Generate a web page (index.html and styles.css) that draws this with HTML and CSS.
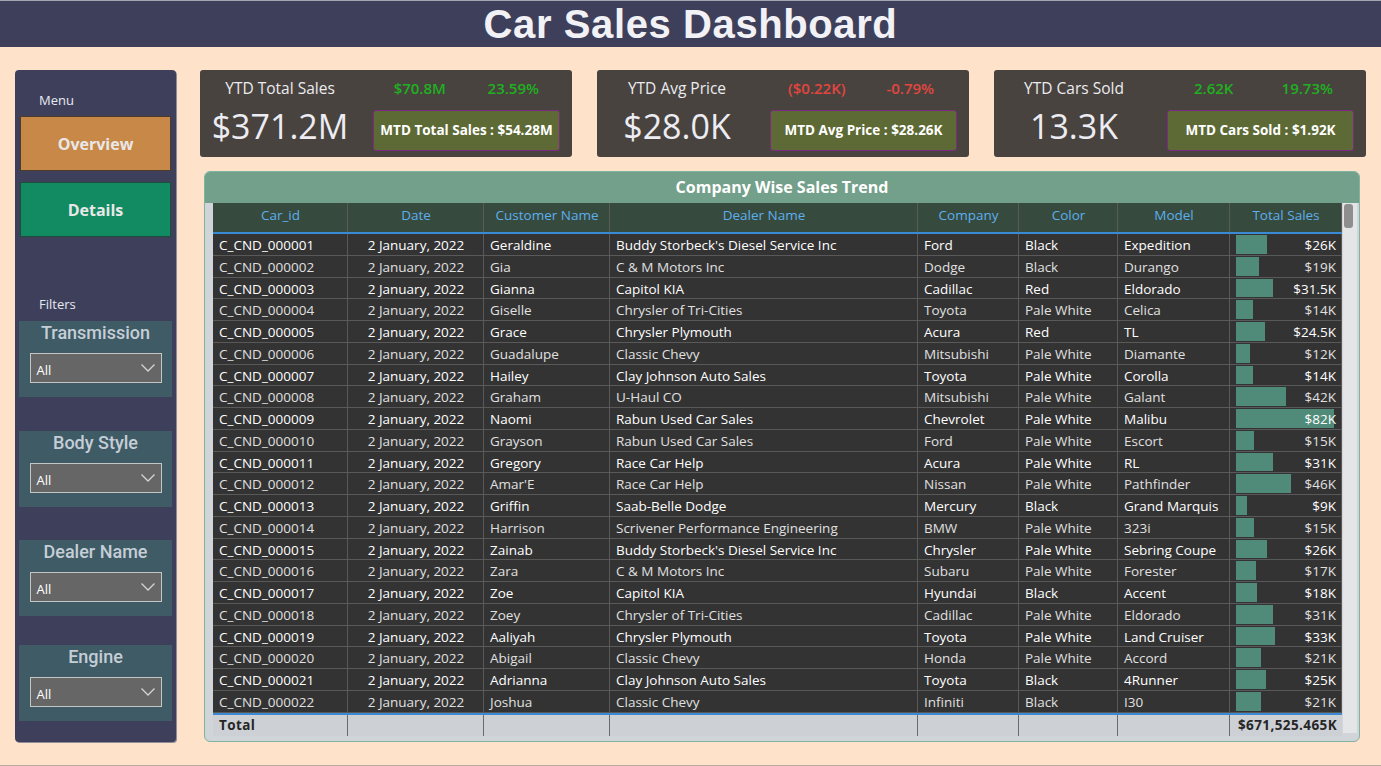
FILE: index.html
```html
<!DOCTYPE html>
<html>
<head>
<meta charset="utf-8">
<title>Car Sales Dashboard</title>
<link rel="stylesheet" href="styles.css">
</head>
<body>
<header class="topbar"><h1 class="title">Car Sales Dashboard</h1></header>
<div class="main">
  <aside class="sidebar">
    <div class="side-label">Menu</div>
    <div class="nav-btn nav-overview">Overview</div>
    <div class="nav-btn nav-details">Details</div>
    <div class="side-label filters-label">Filters</div>
    <div class="slicer s1"><div class="slicer-title">Transmission</div><div class="dropdown"><span>All</span><svg width="14" height="8" viewBox="0 0 14 8"><polyline points="0.5,0.5 7,7 13.5,0.5" fill="none" stroke="#d4d4d4" stroke-width="1.3"/></svg></div></div>
    <div class="slicer s2"><div class="slicer-title">Body Style</div><div class="dropdown"><span>All</span><svg width="14" height="8" viewBox="0 0 14 8"><polyline points="0.5,0.5 7,7 13.5,0.5" fill="none" stroke="#d4d4d4" stroke-width="1.3"/></svg></div></div>
    <div class="slicer s3"><div class="slicer-title">Dealer Name</div><div class="dropdown"><span>All</span><svg width="14" height="8" viewBox="0 0 14 8"><polyline points="0.5,0.5 7,7 13.5,0.5" fill="none" stroke="#d4d4d4" stroke-width="1.3"/></svg></div></div>
    <div class="slicer s4"><div class="slicer-title">Engine</div><div class="dropdown"><span>All</span><svg width="14" height="8" viewBox="0 0 14 8"><polyline points="0.5,0.5 7,7 13.5,0.5" fill="none" stroke="#d4d4d4" stroke-width="1.3"/></svg></div></div>
  </aside>
  <section class="content">
    <div class="kpis">
      <div class="kpi">
        <div class="kpi-left"><div class="kpi-title">YTD Total Sales</div><div class="kpi-value">$371.2M</div></div>
        <div class="kpi-right">
          <div class="kpi-deltas"><span class="up">$70.8M</span><span class="up">23.59%</span></div>
          <div class="mtd">MTD Total Sales : $54.28M</div>
        </div>
      </div>
      <div class="kpi">
        <div class="kpi-left"><div class="kpi-title">YTD Avg Price</div><div class="kpi-value">$28.0K</div></div>
        <div class="kpi-right">
          <div class="kpi-deltas"><span class="down">($0.22K)</span><span class="down">-0.79%</span></div>
          <div class="mtd">MTD Avg Price : $28.26K</div>
        </div>
      </div>
      <div class="kpi">
        <div class="kpi-left"><div class="kpi-title">YTD Cars Sold</div><div class="kpi-value">13.3K</div></div>
        <div class="kpi-right">
          <div class="kpi-deltas"><span class="up">2.62K</span><span class="up">19.73%</span></div>
          <div class="mtd">MTD Cars Sold : $1.92K</div>
        </div>
      </div>
    </div>
    <div class="panel">
      <div class="panel-title">Company Wise Sales Trend</div>
      <div class="panel-body">
        <div class="grid">
          <div class="row head"><div>Car_id</div><div>Date</div><div>Customer Name</div><div>Dealer Name</div><div>Company</div><div>Color</div><div>Model</div><div>Total Sales</div></div>
          <div id="rows"></div>
          <div class="row total"><div>Total</div><div></div><div></div><div></div><div></div><div></div><div></div><div class="num">$671,525.465K</div></div>
        </div>
        <div class="scrollbar"><div class="thumb"></div></div>
      </div>
    </div>
  </section>
</div>
<script src="script.js"></script>
</body>
</html>
```
FILE: script.js
```js
var data = [
["Geraldine","Buddy Storbeck's Diesel Service Inc","Ford","Black","Expedition",26,"$26K"],
["Gia","C & M Motors Inc","Dodge","Black","Durango",19,"$19K"],
["Gianna","Capitol KIA","Cadillac","Red","Eldorado",31.5,"$31.5K"],
["Giselle","Chrysler of Tri-Cities","Toyota","Pale White","Celica",14,"$14K"],
["Grace","Chrysler Plymouth","Acura","Red","TL",24.5,"$24.5K"],
["Guadalupe","Classic Chevy","Mitsubishi","Pale White","Diamante",12,"$12K"],
["Hailey","Clay Johnson Auto Sales","Toyota","Pale White","Corolla",14,"$14K"],
["Graham","U-Haul CO","Mitsubishi","Pale White","Galant",42,"$42K"],
["Naomi","Rabun Used Car Sales","Chevrolet","Pale White","Malibu",82,"$82K"],
["Grayson","Rabun Used Car Sales","Ford","Pale White","Escort",15,"$15K"],
["Gregory","Race Car Help","Acura","Pale White","RL",31,"$31K"],
["Amar'E","Race Car Help","Nissan","Pale White","Pathfinder",46,"$46K"],
["Griffin","Saab-Belle Dodge","Mercury","Black","Grand Marquis",9,"$9K"],
["Harrison","Scrivener Performance Engineering","BMW","Pale White","323i",15,"$15K"],
["Zainab","Buddy Storbeck's Diesel Service Inc","Chrysler","Pale White","Sebring Coupe",26,"$26K"],
["Zara","C & M Motors Inc","Subaru","Pale White","Forester",17,"$17K"],
["Zoe","Capitol KIA","Hyundai","Black","Accent",18,"$18K"],
["Zoey","Chrysler of Tri-Cities","Cadillac","Pale White","Eldorado",31,"$31K"],
["Aaliyah","Chrysler Plymouth","Toyota","Pale White","Land Cruiser",33,"$33K"],
["Abigail","Classic Chevy","Honda","Pale White","Accord",21,"$21K"],
["Adrianna","Clay Johnson Auto Sales","Toyota","Black","4Runner",25,"$25K"],
["Joshua","Classic Chevy","Infiniti","Black","I30",21,"$21K"]
];
var html = "";
for (var i = 0; i < data.length; i++) {
  var d = data[i];
  var id = "C_CND_0000" + (i + 1 < 10 ? "0" : "") + (i + 1);
  var cls = (i % 2 === 0) ? "row data odd" : "row data even";
  html += '<div class="' + cls + '">' +
    '<div>' + id + '</div>' +
    '<div class="center">2 January, 2022</div>' +
    '<div>' + d[0] + '</div>' +
    '<div>' + d[1].replace(/&/g, "&amp;") + '</div>' +
    '<div>' + d[2] + '</div>' +
    '<div>' + d[3] + '</div>' +
    '<div>' + d[4] + '</div>' +
    '<div class="num bar-cell"><span class="bar" style="width:' + Math.round(d[5] * 1.19) + 'px"></span><span class="val">' + d[6] + '</span></div>' +
    '</div>';
}
document.getElementById("rows").innerHTML = html;
```
FILE: styles.css
```css
* { box-sizing: border-box; }
html, body { margin: 0; padding: 0; }
body {
  background: #ffe2ca;
  width: 1381px;
  height: 766px;
  overflow: hidden;
  font-family: "Open Sans", "Noto Sans", sans-serif;
  border-bottom: 1px solid #b5aba3;
}
.topbar {
  height: 47px;
  background: #3e405b;
  border-top: 1px solid #a3a5b0;
  display: flex;
  justify-content: center;
  align-items: center;
}
.title {
  margin: 0;
  font-family: "Liberation Sans", Arial, sans-serif;
  font-weight: bold;
  font-size: 40px;
  letter-spacing: 0.6px;
  color: #f2f2f6;
  line-height: 46px;
}
.main {
  display: flex;
  padding: 23px 0 0 15px;
  gap: 24px;
}
.sidebar {
  width: 161px;
  height: 672px;
  background: #3e405b;
  border-radius: 4px;
  box-shadow: 1px 1px 0 #8e8c98;
  padding: 20px 0 0 5px;
  display: flex;
  flex-direction: column;
}
.side-label {
  color: #e6e8f0;
  font-size: 13px;
  line-height: 20px;
  padding-left: 19px;
}
.filters-label { margin-top: 57px; }
.nav-btn {
  width: 151px;
  height: 55px;
  display: flex;
  align-items: center;
  justify-content: center;
  font-weight: bold;
  font-size: 16px;
  color: #e8e8e8;
}
.nav-overview {
  margin-top: 6px;
  background: #c88848;
  border: 1px solid #4d3b2b;
}
.nav-details {
  margin-top: 11px;
  background: #128b62;
  border: 1px solid #1d4d3b;
}
.slicer {
  width: 153px;
  height: 76px;
  margin-left: -1px;
  background: #3e5b66;
  display: flex;
  flex-direction: column;
  align-items: center;
}
.s1 { margin-top: 7px; }
.s2 { margin-top: 34px; }
.s3 { margin-top: 33px; }
.s4 { margin-top: 29px; }
.slicer-title {
  font-family: "Roboto", "Liberation Sans", sans-serif;
  font-size: 18px;
  font-weight: 500;
  color: #c5ced6;
  line-height: 24px;
  margin-top: 0;
}
.dropdown {
  margin-top: 8px;
  width: 132px;
  height: 30px;
  background: #666666;
  border: 1px solid #c4c4c4;
  display: flex;
  align-items: center;
  justify-content: space-between;
  padding: 3px 6px 0 6px;
  color: #ffffff;
  font-size: 13px;
}
.dropdown svg { margin-top: -4px; }
.content {
  display: flex;
  flex-direction: column;
}
.kpis {
  display: flex;
  gap: 25px;
}
.kpi {
  width: 372px;
  height: 87px;
  background: #48433f;
  border-radius: 3px;
  display: flex;
}
.kpi-left {
  width: 160px;
  text-align: center;
  padding-top: 8px;
}
.kpi-title {
  color: #ececf0;
  font-size: 15.5px;
  line-height: 20px;
}
.kpi-value {
  margin-top: 8px;
  color: #ececf2;
  font-size: 34px;
  line-height: 40px;
}
.kpi-right {
  margin-left: 13px;
  width: 187px;
  padding-top: 8px;
}
.kpi-deltas {
  display: flex;
  line-height: 20px;
  font-size: 15px;
  font-weight: 600;
}
.kpi-deltas span { width: 94px; text-align: center; }
.up { color: #1fb01f; }
.down { color: #e2463f; }
.mtd {
  margin-top: 12px;
  height: 41px;
  background: #5e6a35;
  border: 1px solid #7e2a82;
  border-radius: 3px;
  display: flex;
  align-items: center;
  justify-content: center;
  color: #ffffff;
  font-weight: bold;
  font-size: 13.5px;
  padding-bottom: 2px;
}
.panel {
  margin: 14px 0 0 4px;
  width: 1156px;
  height: 571px;
  border: 1px solid #7fb3a2;
  border-radius: 6px;
  overflow: hidden;
  background: #d1d5d9;
  display: flex;
  flex-direction: column;
}
.panel-title {
  height: 31px;
  background: #73a08a;
  color: #ffffff;
  font-weight: bold;
  font-size: 16px;
  display: flex;
  align-items: center;
  justify-content: center;
  padding-bottom: 2px;
}
.panel-body {
  display: flex;
  padding-left: 8px;
  flex: 1;
}
.grid {
  width: 1129px;
  display: flex;
  flex-direction: column;
}
.row {
  display: grid;
  grid-template-columns: 135px 136px 126px 308px 101px 99px 112px 112px;
}
.row > div {
  border-right: 1px solid #595959;
  padding: 0 5px 0 6px;
  white-space: nowrap;
  overflow: hidden;
}
.head {
  height: 31px;
  background: #364b3d;
  border-bottom: 2px solid #3a8ad6;
}
.head > div {
  color: #5eaeee;
  text-align: center;
  font-size: 13.5px;
  line-height: 24px;
  border-right-color: #5a5a5a;
}
.data {
  height: 21.75px;
  background: #333333;
}
.data > div {
  border-bottom: 1px solid #595959;
  font-size: 13.5px;
  line-height: 21px;
  padding-top: 1px;
}
.data > .bar-cell { padding-top: 0; }
.data > .bar-cell .val { top: 1px; }
.odd > div { color: #ffffff; }
.even > div { color: #e0e0e0; }
.center { text-align: center; }
.num { text-align: right; }
.bar-cell { position: relative; }
.bar {
  position: absolute;
  left: 6px;
  top: 1px;
  bottom: 1px;
  background: #508a78;
}
.val { position: relative; }
.total {
  height: 23px;
  border-top: 2px solid #3a8ad6;
  background: #cdd1d6;
}
.total > div {
  border-right: 1px solid #6a6a6a;
  font-weight: bold;
  font-size: 13.5px;
  letter-spacing: 0.4px;
  line-height: 20px;
  color: #262626;
}
.total > div:last-child { border-right: none; }
.scrollbar {
  width: 14px;
  margin-left: 1px;
  height: 530px;
  background: #e3e5e7;
  padding: 1px 4px 0 1px;
}
.thumb {
  height: 24px;
  background: #8e8e8e;
  border-radius: 3px;
}
```
